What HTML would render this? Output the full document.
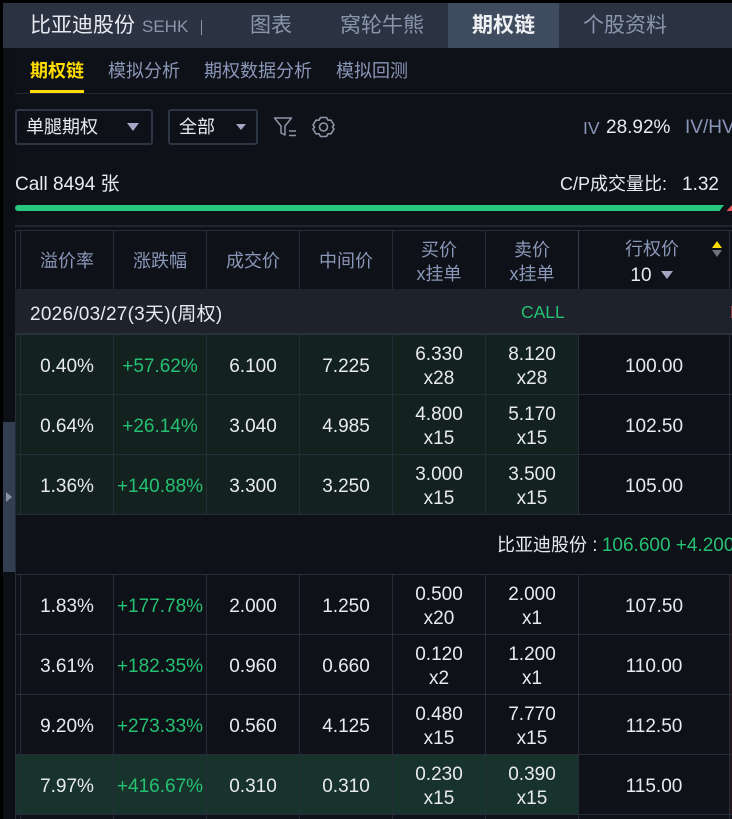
<!DOCTYPE html>
<html lang="zh"><head><meta charset="utf-8"><title>期权链</title>
<style>
*{box-sizing:border-box}
html,body{margin:0;padding:0;background:#000}
body{width:732px;height:819px;overflow:hidden;position:relative;font-family:"Liberation Sans","Noto Sans CJK SC",sans-serif;color:#e8eaf0;font-size:19px}
.a{position:absolute;white-space:nowrap}
.bg{position:absolute;left:3px;top:3px;width:729px;height:816px;background:#0e1117}
.r{position:absolute;left:15px;width:717px;height:60px;border-bottom:1px solid #272c39}
.c{position:absolute;top:0;width:93px;height:59px;border-left:1px solid #272c39;display:flex;flex-direction:column;align-items:center;justify-content:center;line-height:24px;text-align:center;padding-top:4px}
.c1{left:5px}.c2{left:98px}.c3{left:191px}.c4{left:284px}.c5{left:377px}.c6{left:470px}
.c7{left:563px;width:151px}.c8{left:714px;width:3px}
.g{background:#13211f}.gg{background:#18332b}
.up{color:#25c173}
.h{color:#8a97b8}
.hd{position:absolute;top:230px;height:59px;border-left:1px solid #272c39;width:93px;display:flex;flex-direction:column;align-items:center;justify-content:center;line-height:24px;color:#8a97b8;font-size:18px;padding-top:5px}
.tab{position:absolute;top:3px;height:45px;line-height:46px;font-size:21px;color:#8a96ac;text-align:center}
.sub{position:absolute;top:59px;line-height:24px;font-size:18px;color:#8a97b8}
</style></head>
<body>
<div class="bg"></div>
<div class="a" style="left:3px;top:3px;width:12px;height:816px;background:#0c0f13"></div>
<div class="a" style="left:3px;top:422px;width:12px;height:150px;background:#333f50"></div>
<div class="a" style="left:6px;top:492px;width:0;height:0;border-left:6px solid #8a93a3;border-top:5px solid transparent;border-bottom:5px solid transparent"></div>

<!-- top bar -->
<div class="a" style="left:3px;top:3px;width:729px;height:45px;background:#2b3242"></div>
<div class="a" style="left:448px;top:3px;width:111px;height:45px;background:#3f4b5f"></div>
<div class="a" style="left:30px;top:3px;line-height:46px;font-size:21px;color:#e6e9f0">比亚迪股份</div>
<div class="a" style="left:142px;top:3px;line-height:47px;font-size:17px;color:#8a96ac">SEHK</div>
<div class="a" style="left:201px;top:20px;width:1px;height:15px;background:#8a96ac"></div>
<div class="tab" style="left:250px">图表</div>
<div class="tab" style="left:340px">窝轮牛熊</div>
<div class="tab" style="left:448px;width:111px;color:#eef0f4;font-weight:700">期权链</div>
<div class="tab" style="left:583px">个股资料</div>

<!-- sub nav -->
<div class="sub" style="left:30px;color:#ffdd00;font-weight:700">期权链</div>
<div class="sub" style="left:108px">模拟分析</div>
<div class="sub" style="left:204px">期权数据分析</div>
<div class="sub" style="left:336px">模拟回测</div>
<div class="a" style="left:15px;top:93px;width:717px;height:1px;background:#23272f"></div>
<div class="a" style="left:30px;top:90px;width:54px;height:3px;background:#ffdd00"></div>

<!-- selects -->
<div class="a" style="left:15px;top:109px;width:138px;height:36px;border:2px solid #2e3646;border-radius:3px"></div>
<div class="a" style="left:26px;top:109px;line-height:37px;font-size:18px">单腿期权</div>
<div class="a" style="left:127px;top:123px;width:0;height:0;border-top:8px solid #a5a5c5;border-left:6px solid transparent;border-right:6px solid transparent"></div>
<div class="a" style="left:168px;top:109px;width:90px;height:36px;border:2px solid #2e3646;border-radius:3px"></div>
<div class="a" style="left:179px;top:109px;line-height:37px;font-size:18px">全部</div>
<div class="a" style="left:236px;top:124px;width:0;height:0;border-top:6px solid #a5a5c5;border-left:5px solid transparent;border-right:5px solid transparent"></div>

<svg class="a" style="left:273px;top:115px" width="24" height="24" viewBox="0 0 24 24" fill="none" stroke="#8f96a8" stroke-width="1.5">
<path d="M1.5 3H18.5L12 11V20L8 18V11Z" stroke-linejoin="round"/><path d="M16 16H23M16 20.5H23"/></svg>
<svg class="a" style="left:312px;top:116px" width="23" height="22" viewBox="0 0 23 22" fill="none" stroke="#8f96a8" stroke-width="1.6" stroke-linejoin="round">
<path d="M8.5 1.5H14.5L16 4.2H19L22 9L20.5 11L22 13L19 17.8H16L14.5 20.5H8.5L7 17.8H4L1 13L2.5 11L1 9L4 4.2H7Z"/><circle cx="11.5" cy="11" r="4"/></svg>

<div class="a h" style="left:583px;top:116px;line-height:24px;font-size:17.5px">IV</div>
<div class="a" style="left:606px;top:116px;line-height:24px">28.92%</div>
<div class="a h" style="left:685px;top:116px;line-height:24px;width:47px;overflow:hidden">IV/HV</div>

<div class="a" style="left:15px;top:173px;line-height:24px">Call 8494 张</div>
<div class="a" style="left:560px;top:172px;line-height:24px;font-size:18px">C/P成交量比:</div>
<div class="a" style="left:682px;top:173px;line-height:24px">1.32</div>

<svg class="a" style="left:15px;top:205px" width="717" height="6">
<path d="M3 0H709L704.5 6H3A3 3 0 0 1 3 0Z" fill="#27c77e"/>
<path d="M717 0L711.5 6H717Z" fill="#e8545a"/></svg>

<!-- table -->
<div class="a" style="left:15px;top:225px;width:717px;height:2px;background:#1f2430"></div>
<div class="a" style="left:15px;top:230px;width:717px;height:1px;background:#272c39"></div>
<div class="a" style="left:15px;top:230px;width:1px;height:589px;background:#272c39"></div>
<div class="a" style="left:20px;top:230px;width:1px;height:59px;background:#272c39"></div>
<div class="hd" style="left:20px;padding-top:2px">溢价率</div>
<div class="hd" style="left:113px;padding-top:2px">涨跌幅</div>
<div class="hd" style="left:206px;padding-top:2px">成交价</div>
<div class="hd" style="left:299px;padding-top:2px">中间价</div>
<div class="hd" style="left:392px"><span>买价</span><span>x挂单</span></div>
<div class="hd" style="left:485px"><span>卖价</span><span>x挂单</span></div>
<div class="hd" style="left:578px;width:151px;border-left-color:#353c4e"><span style="margin-right:4px">行权价</span><span style="color:#e8eaf0;font-size:19px;margin-right:26px;margin-top:3px">10</span></div>
<div class="a" style="left:729px;top:230px;width:1px;height:59px;background:#272c39"></div>
<div class="a" style="left:661px;top:271px;width:0;height:0;border-top:8px solid #a5a5c5;border-left:6px solid transparent;border-right:6px solid transparent"></div>
<div class="a" style="left:712px;top:241px;width:0;height:0;border-bottom:7px solid #ffdd00;border-left:5px solid transparent;border-right:5px solid transparent"></div>
<div class="a" style="left:712px;top:250px;width:0;height:0;border-top:7px solid #70707f;border-left:5px solid transparent;border-right:5px solid transparent"></div>

<div class="a" style="left:15px;top:289px;width:717px;height:46px;background:#1e222d;border-bottom:2px solid #2a2f3c"></div>
<div class="a" style="left:30px;top:303px;line-height:24px;letter-spacing:.25px">2026/03/27(3天)(周权)</div>
<div class="a up" style="left:521px;top:300px;line-height:24px;font-size:17.5px">CALL</div>
<div class="a" style="left:730px;top:300px;width:2px;overflow:hidden;line-height:24px;font-size:17.5px;color:#e8545a">PUT</div>

<div class="r" style="top:335px;height:60px">
<div class="a g" style="left:1px;top:0;width:562px;height:59px"></div>
<div class="c c1">0.40%</div><div class="c c2 up">+57.62%</div><div class="c c3">6.100</div><div class="c c4">7.225</div><div class="c c5"><span>6.330</span><span>x28</span></div><div class="c c6"><span>8.120</span><span>x28</span></div><div class="c c7">100.00</div><div class="c c8"></div>
</div>
<div class="r" style="top:395px">
<div class="a g" style="left:1px;top:0;width:562px;height:59px"></div>
<div class="c c1">0.64%</div><div class="c c2 up">+26.14%</div><div class="c c3">3.040</div><div class="c c4">4.985</div><div class="c c5"><span>4.800</span><span>x15</span></div><div class="c c6"><span>5.170</span><span>x15</span></div><div class="c c7">102.50</div><div class="c c8"></div>
</div>
<div class="r" style="top:455px">
<div class="a g" style="left:1px;top:0;width:562px;height:59px"></div>
<div class="c c1">1.36%</div><div class="c c2 up">+140.88%</div><div class="c c3">3.300</div><div class="c c4">3.250</div><div class="c c5"><span>3.000</span><span>x15</span></div><div class="c c6"><span>3.500</span><span>x15</span></div><div class="c c7">105.00</div><div class="c c8"></div>
</div>

<div class="a" style="left:497px;top:533px;line-height:24px;width:235px;overflow:hidden"><span style="font-size:18px">比亚迪股份</span> : <span class="up" style="margin-left:-1px">106.600 +4.200</span></div>
<div class="a" style="left:15px;top:574px;width:717px;height:1px;background:#272c39"></div>

<div class="r" style="top:575px">
<div class="c c1">1.83%</div><div class="c c2 up">+177.78%</div><div class="c c3">2.000</div><div class="c c4">1.250</div><div class="c c5"><span>0.500</span><span>x20</span></div><div class="c c6"><span>2.000</span><span>x1</span></div><div class="c c7">107.50</div><div class="c c8" style="background:#241a1e"></div>
</div>
<div class="r" style="top:635px">
<div class="c c1">3.61%</div><div class="c c2 up">+182.35%</div><div class="c c3">0.960</div><div class="c c4">0.660</div><div class="c c5"><span>0.120</span><span>x2</span></div><div class="c c6"><span>1.200</span><span>x1</span></div><div class="c c7">110.00</div><div class="c c8" style="background:#241a1e"></div>
</div>
<div class="r" style="top:695px">
<div class="c c1">9.20%</div><div class="c c2 up">+273.33%</div><div class="c c3">0.560</div><div class="c c4">4.125</div><div class="c c5"><span>0.480</span><span>x15</span></div><div class="c c6"><span>7.770</span><span>x15</span></div><div class="c c7">112.50</div><div class="c c8" style="background:#241a1e"></div>
</div>
<div class="r" style="top:755px">
<div class="a gg" style="left:1px;top:0;width:562px;height:59px"></div>
<div class="c c1">7.97%</div><div class="c c2 up">+416.67%</div><div class="c c3">0.310</div><div class="c c4">0.310</div><div class="c c5"><span>0.230</span><span>x15</span></div><div class="c c6"><span>0.390</span><span>x15</span></div><div class="c c7">115.00</div><div class="c c8" style="background:#241a1e"></div>
</div>
<div class="a" style="left:20px;top:815px;width:1px;height:4px;background:#272c39"></div>
<div class="a" style="left:113px;top:815px;width:1px;height:4px;background:#272c39"></div>
<div class="a" style="left:206px;top:815px;width:1px;height:4px;background:#272c39"></div>
<div class="a" style="left:299px;top:815px;width:1px;height:4px;background:#272c39"></div>
<div class="a" style="left:392px;top:815px;width:1px;height:4px;background:#272c39"></div>
<div class="a" style="left:485px;top:815px;width:1px;height:4px;background:#272c39"></div>
<div class="a" style="left:578px;top:815px;width:1px;height:4px;background:#272c39"></div>
<div class="a" style="left:729px;top:815px;width:1px;height:4px;background:#272c39"></div>
</body></html>
